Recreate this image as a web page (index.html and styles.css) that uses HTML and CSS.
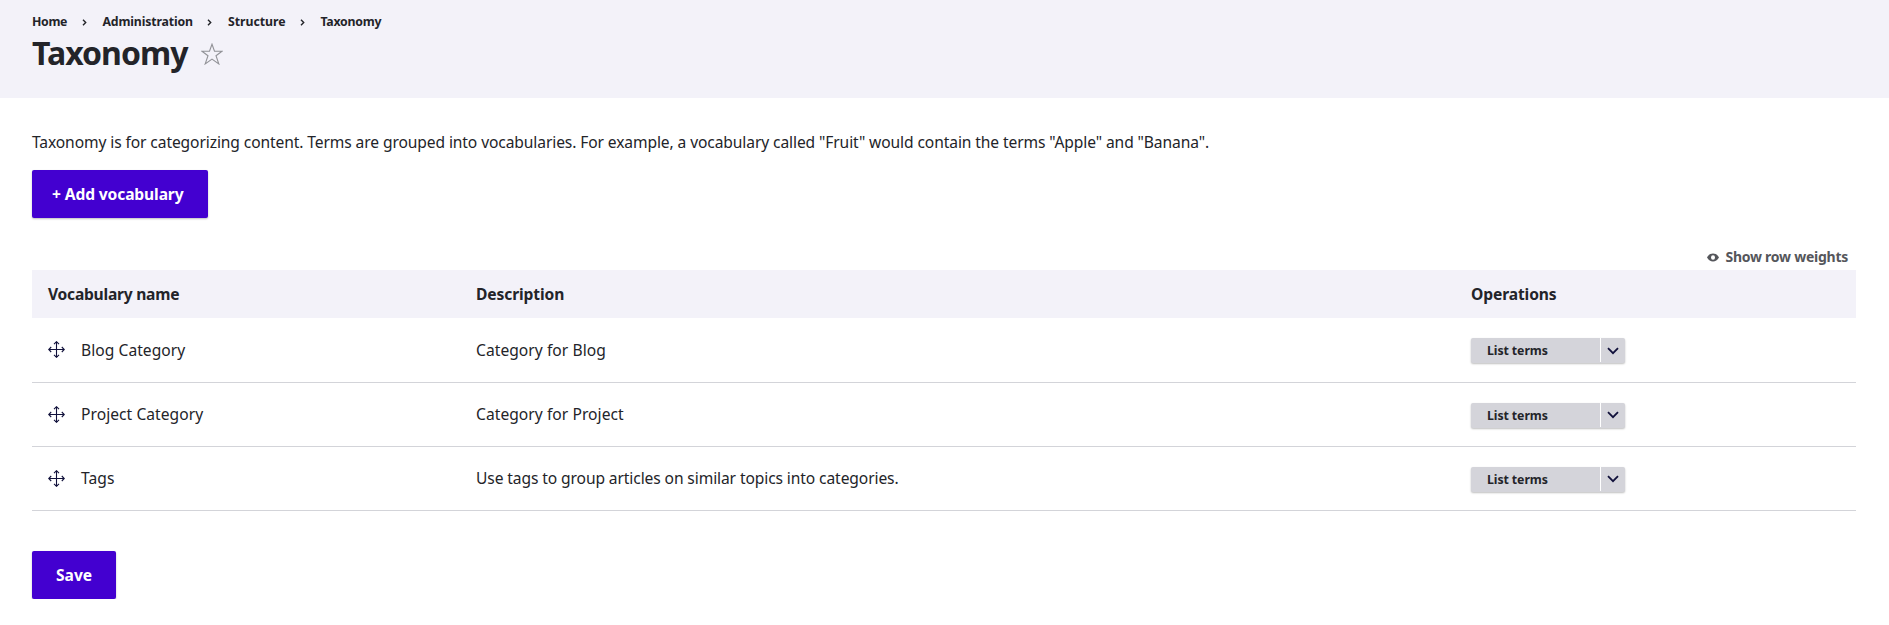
FILE: index.html
```html
<!DOCTYPE html>
<html lang="en">
<head>
<meta charset="utf-8">
<title>Taxonomy</title>
<link rel="stylesheet" href="styles.css">
</head>
<body>
<svg width="0" height="0" class="defs" aria-hidden="true">
  <symbol id="sep" viewBox="0 0 5 7"><path d="M1 .8 3.7 3.5 1 6.2" fill="none" stroke="#232429" stroke-width="1.4"/></symbol>
  <symbol id="move" viewBox="0 0 17 17"><path d="M8.5 1v15M1 8.5h15M6 3.2 8.5.7 11 3.2M6 13.8l2.5 2.5 2.5-2.5M3.2 6 .7 8.5 3.2 11M13.8 6l2.5 2.5-2.5 2.5" fill="none" stroke="#11113b" stroke-width="1.1"/></symbol>
  <symbol id="chev" viewBox="0 0 12 8"><path d="M1 1.2 6 6.2l5-5" fill="none" stroke="#11113b" stroke-width="1.8"/></symbol>
</svg>
<header class="page-header">
  <nav class="breadcrumb">
    <a class="crumb crumb-home">Home</a><svg class="sep"><use href="#sep"/></svg>
    <a class="crumb crumb-admin">Administration</a><svg class="sep"><use href="#sep"/></svg>
    <a class="crumb crumb-structure">Structure</a><svg class="sep"><use href="#sep"/></svg>
    <a class="crumb crumb-current">Taxonomy</a>
  </nav>
  <div class="title-row">
    <h1 class="title">Taxonomy</h1>
    <svg class="star" viewBox="0 0 22 22"><path d="M11 1.2 13.5 8.2H21L15 12.7l2.8 8.2-6.8-4.8-6.8 4.8L7 12.7 1 8.2h7.5z" fill="none" stroke="#919297" stroke-width="1.1"/></svg>
  </div>
</header>
<main class="content">
  <p class="help">Taxonomy is for categorizing content. Terms are grouped into vocabularies. For example, a vocabulary called "Fruit" would contain the terms "Apple" and "Banana".</p>
  <a class="button button-add">+ Add vocabulary</a>
  <div class="weights">
    <svg class="eye" viewBox="0 0 12 9"><path d="M0 4.500C1.600 1.600 3.600.5 6 .5s4.400 1.100 6 4c-1.600 2.900-3.600 4-6 4s-4.400-1.100-6-4z" fill="#55565b"/><ellipse cx="6" cy="4.500" rx="2" ry="2.200" fill="#fff"/></svg>
    <span class="weights-label">Show row weights</span>
  </div>
  <div class="table">
    <div class="row head">
      <div class="cell th-name">Vocabulary name</div><div class="cell">Description</div><div class="cell">Operations</div>
    </div>
    <div class="row first">
      <div class="cell name"><svg class="move"><use href="#move"/></svg><span>Blog Category</span></div>
      <div class="cell">Category for Blog</div>
      <div class="cell ops"><div class="drop"><span class="main">List terms</span><span class="toggle"><svg class="chev"><use href="#chev"/></svg></span></div></div>
    </div>
    <div class="row">
      <div class="cell name"><svg class="move"><use href="#move"/></svg><span>Project Category</span></div>
      <div class="cell">Category for Project</div>
      <div class="cell ops"><div class="drop"><span class="main">List terms</span><span class="toggle"><svg class="chev"><use href="#chev"/></svg></span></div></div>
    </div>
    <div class="row">
      <div class="cell name"><svg class="move"><use href="#move"/></svg><span>Tags</span></div>
      <div class="cell long">Use tags to group articles on similar topics into categories.</div>
      <div class="cell ops"><div class="drop"><span class="main">List terms</span><span class="toggle"><svg class="chev"><use href="#chev"/></svg></span></div></div>
    </div>
  </div>
  <a class="button button-save">Save</a>
</main>
</body>
</html>
```
FILE: styles.css
```css
* { box-sizing: border-box; }
body { margin: 0; background: #fff; color: #232429; font: 400 15.6px/24px "Noto Sans", sans-serif; }
svg { display: block; flex: none; }
.defs { display: none; }
.page-header { height: 98px; padding: 12px 32px 0; background: #f3f2f9; }
.breadcrumb { display: flex; align-items: center; height: 20px; font-size: 12.3px; font-weight: 700; line-height: 20px; white-space: nowrap; }
.crumb-home { width: 35px; letter-spacing: -0.33px; }
.crumb-admin { width: 90px; letter-spacing: -0.15px; }
.crumb-structure { width: 57px; letter-spacing: -0.04px; }
.crumb-current { letter-spacing: -0.24px; }
.sep { width: 5px; height: 7px; margin: 0 16px 0 14.5px; }
.title-row { display: flex; align-items: flex-start; gap: 13px; margin-top: 1px; }
.title { width: 156px; margin: 0; font-size: 32px; font-weight: 700; line-height: 40px; letter-spacing: -0.96px; white-space: nowrap; }
.star { width: 22px; height: 22px; margin-top: 10px; }
.content { display: flex; flex-direction: column; align-items: flex-start; padding: 32px 33px 0 32px; }
.help { margin: 0; letter-spacing: -0.105px; }
.button { height: 48px; border-radius: 2px; background: #4300d0; color: #fff; font-weight: 700; line-height: 48px; box-shadow: 0 1px 2px rgba(0, 0, 0, 0.25); white-space: nowrap; }
.button-add { width: 176px; margin-top: 16px; padding-left: 20px; letter-spacing: -0.12px; }
.button-save { width: 84px; margin-top: 40px; padding-left: 24px; letter-spacing: -0.02px; }
.weights { display: flex; align-items: center; align-self: flex-end; gap: 6px; height: 24px; margin-top: 27px; padding-right: 8px; color: #55565b; font-size: 14px; font-weight: 700; }
.weights-label { letter-spacing: -0.25px; }
.eye { width: 12px; height: 9px; }
.table { align-self: stretch; margin-top: 1px; }
.row { display: grid; grid-template-columns: 428px 995px 1fr; height: 64px; padding-left: 16px; border-bottom: 1px solid #d3d4d9; }
.cell { padding-top: 19px; letter-spacing: 0.05px; }
.head { height: 48px; border: 0; background: #f3f2f9; font-weight: 700; }
.head .cell { padding-top: 12px; letter-spacing: -0.11px; }
.head .th-name { letter-spacing: -0.24px; }
.first { height: 65px; }
.first .cell { padding-top: 20px; }
.name { display: flex; align-items: flex-start; gap: 16px; }
.move { width: 17px; height: 17px; margin-top: 4px; }
.first .move { margin-top: 3px; }
.cell.long { letter-spacing: -0.106px; }
.row .ops { padding-top: 20px; }
.drop { display: flex; width: 154px; height: 25px; border-radius: 2px; background: #d4d4da; box-shadow: 0 1px 2px rgba(0, 0, 0, 0.25); }
.main { width: 130px; height: 24px; padding-left: 16px; border-right: 1px solid #fff; font-size: 12.3px; font-weight: 700; line-height: 26px; letter-spacing: -0.08px; }
.toggle { flex: 1; padding: 7.5px 0 0 6px; }
.first .toggle { padding-top: 8.5px; }
.chev { width: 12px; height: 8px; }
```
